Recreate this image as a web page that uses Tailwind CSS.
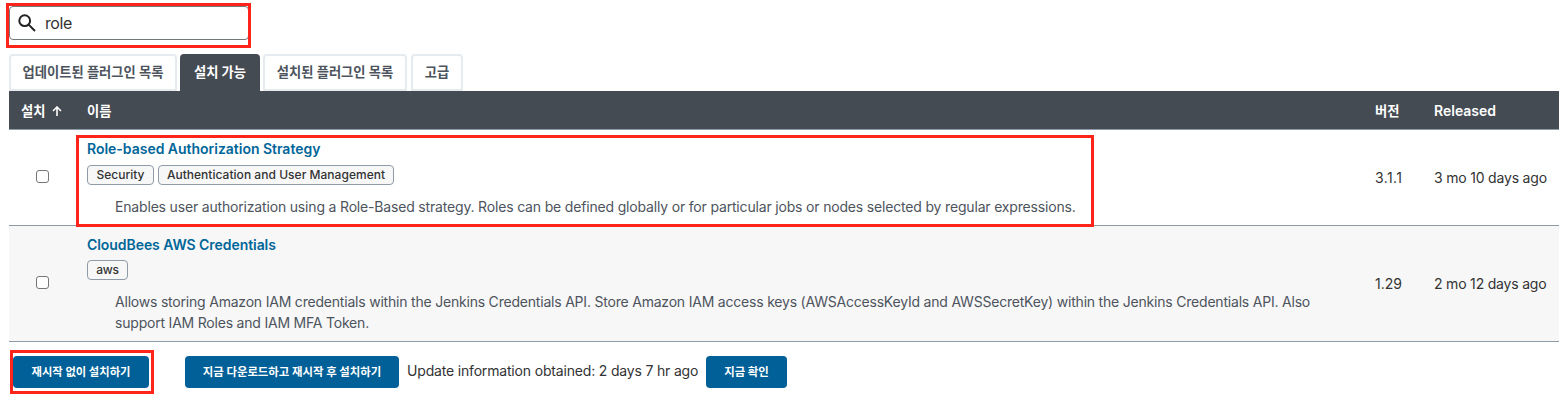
<!DOCTYPE html>
<html lang="ko">
<head>
<meta charset="utf-8">
<title>Plugin Manager</title>
<script src="https://cdn.jsdelivr.net/npm/@tailwindcss/browser@4"></script>
</head>
<body class="relative h-[408px] w-[1565px] overflow-hidden bg-white pl-[9px] pr-[6px] pt-[6px] font-['Inter','Noto_Sans_CJK_KR',sans-serif] text-[14px] text-[#333]">
  <label class="flex h-[34px] w-[240px] items-center rounded-[4px] border border-[#73787d] bg-white pl-[8px]">
    <svg class="size-[18px]" viewBox="0 0 18 18" fill="none" stroke="#222" stroke-width="2"><circle cx="6.7" cy="6.7" r="5.4"/><path d="M10.6 10.6L17 17"/></svg>
    <span class="ml-[9px] text-[16px] leading-5 tracking-[-0.4px]">role</span>
  </label>

  <nav class="mt-[14px] flex h-[37px] text-[13.3px] font-bold text-[#4d545d]">
    <a class="flex w-[168px] items-center justify-center rounded-t-[4px] border-2 border-[#e6ebf0] pt-[1px] whitespace-nowrap">업데이트된 플러그인 목록</a>
    <a class="ml-[3px] flex w-[80px] items-center justify-center rounded-t-[4px] bg-[#454b53] pt-[1px] whitespace-nowrap text-white">설치 가능</a>
    <a class="ml-[3px] flex w-[144px] items-center justify-center rounded-t-[4px] border-2 border-[#e6ebf0] pt-[1px] whitespace-nowrap">설치된 플러그인 목록</a>
    <a class="ml-[4px] flex w-[52px] items-center justify-center rounded-t-[4px] border-2 border-[#e6ebf0] pt-[1px] whitespace-nowrap">고급</a>
  </nav>

  <div class="grid h-[39px] grid-cols-[78px_1288px_59px_1fr] items-center border-b border-[#8f9ba7] bg-[#454b53] font-bold text-white">
    <div class="flex items-center pl-[12px] pt-[3px] text-[13.3px]">설치
      <svg class="mb-[2px] ml-[7px] size-[10px]" viewBox="0 0 10 10" fill="none" stroke="white" stroke-width="1.6"><path d="M5 10V1M1 5L5 1L9 5"/></svg>
    </div>
    <div class="pt-[3px] text-[13.3px]">이름</div>
    <div class="pt-[3px] text-[13.3px]">버전</div>
    <div class="pt-px font-semibold">Released</div>
  </div>

  <div class="grid h-[96px] grid-cols-[78px_1288px_59px_1fr] items-center border-b border-[#8f9ba7]">
    <span class="ml-[27px] mb-[3px] size-[13px] rounded-[3px] border border-[#767676] bg-white"></span>
    <div class="h-full pt-[9px]">
      <a class="block w-fit leading-5 font-semibold tracking-[-0.02px] text-[#006699]">Role-based Authorization Strategy</a>
      <div class="mt-[6px] flex gap-[4px] text-[12px] font-medium">
        <span class="flex h-[20px] w-[67px] items-center justify-center rounded-[4px] border border-[#8f9ba7] bg-[#f7f7f7]">Security</span>
        <span class="flex h-[20px] w-[236px] items-center justify-center rounded-[4px] border border-[#8f9ba7] bg-[#f7f7f7] tracking-[0.03px] whitespace-nowrap">Authentication and User Management</span>
      </div>
      <p class="mt-[11px] ml-[28px] leading-[21px] tracking-[-0.175px] whitespace-nowrap text-[#4d545d]">Enables user authorization using a Role-Based strategy. Roles can be defined globally or for particular jobs or nodes selected by regular expressions.</p>
    </div>
    <div class="tracking-[0.4px]">3.1.1</div>
    <div class="tracking-[-0.19px] whitespace-nowrap">3 mo 10 days ago</div>
  </div>

  <div class="grid h-[116px] grid-cols-[78px_1288px_59px_1fr] items-center border-b border-[#8f9ba7] bg-[#f7f7f7]">
    <span class="ml-[27px] mb-[3px] size-[13px] rounded-[3px] border border-[#767676] bg-white"></span>
    <div class="h-full pt-[9px]">
      <a class="block w-fit leading-5 font-semibold tracking-[-0.06px] text-[#006699]">CloudBees AWS Credentials</a>
      <div class="mt-[5px] flex text-[12px] font-medium">
        <span class="flex h-[20px] w-[41px] items-center justify-center rounded-[4px] border border-[#8f9ba7] bg-[#f7f7f7] tracking-[-0.2px]">aws</span>
      </div>
      <p class="mt-[11px] ml-[28px] leading-[21px] tracking-[-0.205px] whitespace-nowrap text-[#4d545d]">Allows storing Amazon IAM credentials within the Jenkins Credentials API. Store Amazon IAM access keys (AWSAccessKeyId and AWSSecretKey) within the Jenkins Credentials API. Also<br>support IAM Roles and IAM MFA Token.</p>
    </div>
    <div>1.29</div>
    <div class="tracking-[-0.19px] whitespace-nowrap">2 mo 12 days ago</div>
  </div>

  <div class="mt-[14px] flex h-[32px] items-center pl-[4px]">
    <button class="h-[32px] w-[136px] rounded-[4px] bg-[#006097] pt-[1px] text-[11.3px] font-bold whitespace-nowrap text-white">재시작 없이 설치하기</button>
    <button class="ml-[36px] h-[32px] w-[214px] rounded-[4px] bg-[#006097] pt-[1px] text-[11.4px] font-bold whitespace-nowrap text-white">지금 다운로드하고 재시작 후 설치하기</button>
    <span class="mb-[3px] ml-[8px] w-[299px] tracking-[-0.175px] whitespace-nowrap">Update information obtained: 2 days 7 hr ago</span>
    <button class="h-[32px] w-[81px] rounded-[4px] bg-[#006097] pt-[1px] text-[11.4px] font-bold whitespace-nowrap text-white">지금 확인</button>
  </div>

  <div class="pointer-events-none absolute top-[3px] left-[6px] h-[45px] w-[245px] border-3 border-[#ff2419]"></div>
  <div class="pointer-events-none absolute top-[135px] left-[76px] h-[92px] w-[1018px] border-3 border-[#ff2419]"></div>
  <div class="pointer-events-none absolute top-[350px] left-[10px] h-[44px] w-[144px] border-3 border-[#ff2419]"></div>
</body>
</html>
